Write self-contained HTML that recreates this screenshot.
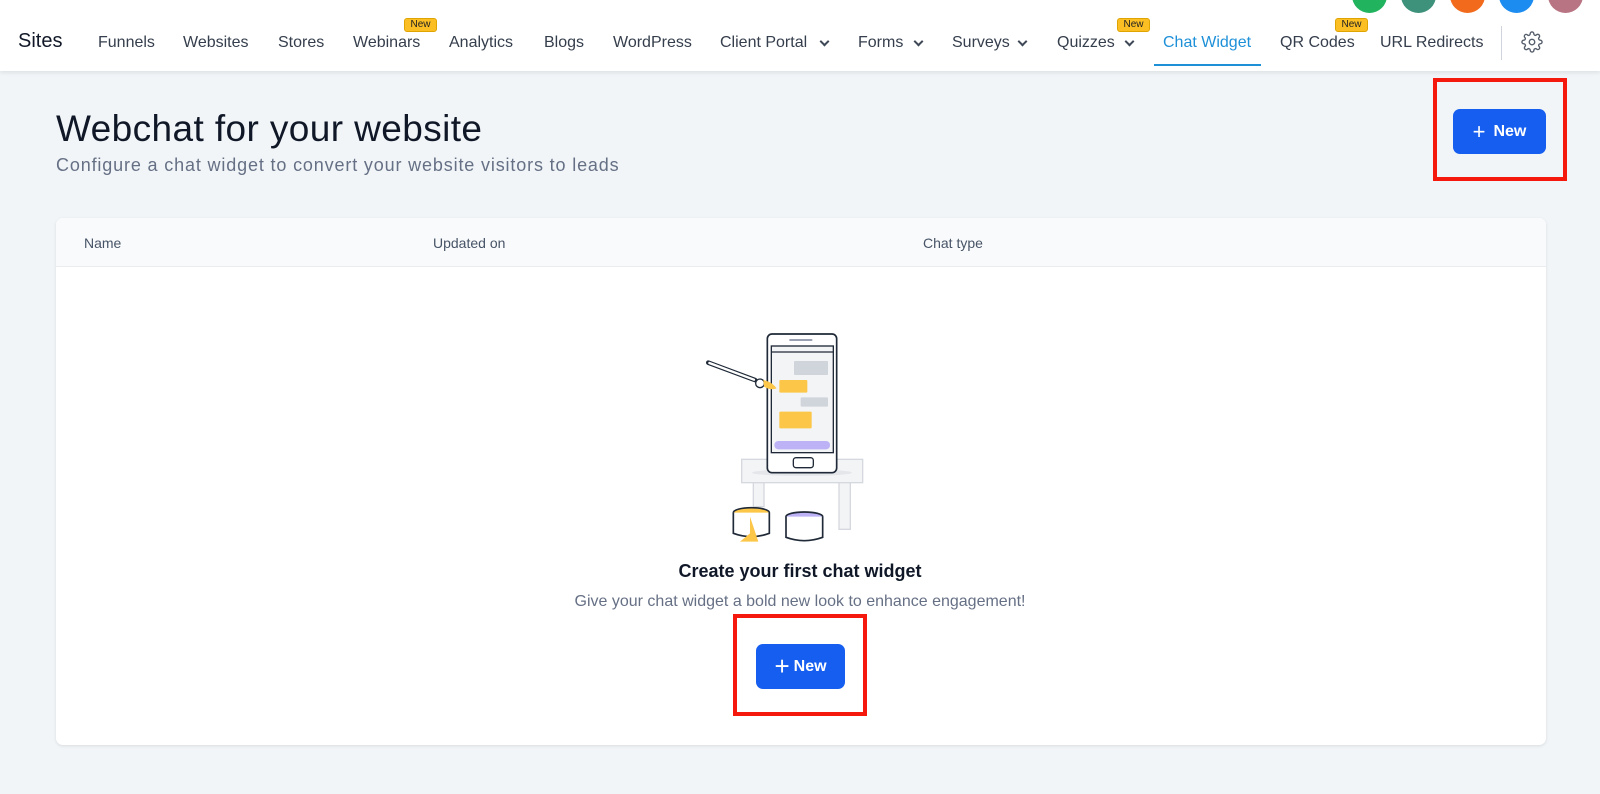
<!DOCTYPE html>
<html><head><meta charset="utf-8"><style>
*{box-sizing:border-box;margin:0;padding:0}
body{width:1600px;height:794px;overflow:hidden;background:#f1f5f8;font-family:"Liberation Sans",Arial,sans-serif;position:relative}
.nav{position:absolute;left:0;top:0;width:1600px;height:71px;background:#fff;box-shadow:0 2px 4px rgba(0,0,0,.08)}
.nav span{position:absolute;top:33px;font-size:16px;color:#353e4c;white-space:nowrap;line-height:20px}
.chev{position:absolute;top:38px;width:7px;height:7px;border-right:2px solid #3f4856;border-bottom:2px solid #3f4856;transform:rotate(45deg)}
.badge{position:absolute;top:18px;height:14px;background:#fbbf24;border:1px solid #e0a400;border-radius:3px;font-size:10px;line-height:12px;color:#222;text-align:center;width:33px}
.av{position:absolute;top:-22px;width:35px;height:35px;border-radius:50%}
.btn{position:absolute;background:#155eef;color:#fff;border-radius:7px;font-size:16px;font-weight:bold;display:flex;align-items:center;justify-content:center;gap:8px}
.red{position:absolute;border:4px solid #f5180d}
</style></head><body>
<div class="nav">
<span style="left:18px;top:31px;font-size:20px;color:#111827">Sites</span>
<span style="left:98px">Funnels</span>
<span style="left:183px">Websites</span>
<span style="left:278px">Stores</span>
<span style="left:353px">Webinars</span>
<div class="badge" style="left:404px">New</div>
<span style="left:449px">Analytics</span>
<span style="left:544px">Blogs</span>
<span style="left:613px">WordPress</span>
<span style="left:720px">Client Portal</span><div class="chev" style="left:821px"></div>
<span style="left:858px">Forms</span><div class="chev" style="left:915px"></div>
<span style="left:952px">Surveys</span><div class="chev" style="left:1019px"></div>
<span style="left:1057px">Quizzes</span><div class="chev" style="left:1126px"></div>
<div class="badge" style="left:1117px">New</div>
<span style="left:1163px;color:#1e90d8">Chat Widget</span>
<div style="position:absolute;left:1154px;top:64px;width:107px;height:2px;background:#1e90d8"></div>
<span style="left:1280px">QR Codes</span>
<div class="badge" style="left:1335px">New</div>
<span style="left:1380px">URL Redirects</span>
<div style="position:absolute;left:1501px;top:26px;width:1px;height:34px;background:#d0d5dd"></div>
<svg style="position:absolute;left:1521px;top:31px" width="22" height="22" viewBox="0 0 24 24" fill="none" stroke="#555e6b" stroke-width="1.5"><circle cx="12" cy="12" r="3"/><path d="M19.4 15a1.65 1.65 0 0 0 .33 1.820l.06.06a2 2 0 1 1-2.830 2.830l-.06-.06a1.650 1.650 0 0 0-1.820-.33 1.650 1.650 0 0 0-1 1.510V21a2 2 0 0 1-4 0v-.09A1.650 1.650 0 0 0 9 19.4a1.650 1.650 0 0 0-1.820.33l-.06.06a2 2 0 1 1-2.830-2.830l.06-.06A1.650 1.650 0 0 0 4.680 15a1.650 1.650 0 0 0-1.510-1H3a2 2 0 0 1 0-4h.09A1.650 1.650 0 0 0 4.6 9a1.650 1.650 0 0 0-.33-1.820l-.06-.06a2 2 0 1 1 2.830-2.830l.06.06A1.650 1.650 0 0 0 9 4.680 1.650 1.650 0 0 0 10 3.170V3a2 2 0 0 1 4 0v.09a1.650 1.650 0 0 0 1 1.510 1.650 1.650 0 0 0 1.820-.33l.06-.06a2 2 0 1 1 2.830 2.830l-.06.06A1.650 1.650 0 0 0 19.4 9a1.650 1.650 0 0 0 1.510 1H21a2 2 0 0 1 0 4h-.09a1.650 1.650 0 0 0-1.510 1z"/></svg>
<div class="av" style="left:1352px;background:#22b35e"></div>
<div class="av" style="left:1401px;background:#3e917a"></div>
<div class="av" style="left:1450px;background:#f26b1d"></div>
<div class="av" style="left:1499px;background:#1d8cf0"></div>
<div class="av" style="left:1548px;background:#b87482"></div>
</div>

<div style="position:absolute;left:56px;top:108px;font-size:37px;letter-spacing:0.4px;color:#101828">Webchat for your website</div>
<div style="position:absolute;left:56px;top:155px;font-size:18px;letter-spacing:0.85px;color:#667085">Configure a chat widget to convert your website visitors to leads</div>
<div class="btn" style="left:1453px;top:109px;width:93px;height:45px"><span style="font-weight:normal;font-size:22px">+</span>New</div>
<div class="red" style="left:1433px;top:78px;width:134px;height:103px"></div>

<div style="position:absolute;left:56px;top:218px;width:1490px;height:527px;background:#fff;border-radius:7px;box-shadow:0 1px 3px rgba(0,0,0,.1);overflow:hidden">
<div style="height:49px;background:#f9fafb;border-bottom:1px solid #eaecf0;position:relative;font-size:14px;color:#475467">
<span style="position:absolute;left:28px;top:17px">Name</span>
<span style="position:absolute;left:377px;top:17px">Updated on</span>
<span style="position:absolute;left:867px;top:17px">Chat type</span>
</div>
</div>

<svg style="position:absolute;left:690px;top:320px" width="200" height="230" viewBox="0 0 600 690">
<rect x="155" y="418" width="363" height="70" fill="#f3f4f6" stroke="#d5d8de" stroke-width="4"/>
<rect x="190" y="488" width="32" height="72" fill="#f3f4f6" stroke="#d5d8de" stroke-width="4"/>
<rect x="447" y="488" width="34" height="140" fill="#f3f4f6" stroke="#d5d8de" stroke-width="4"/>
<ellipse cx="336" cy="458" rx="150" ry="10" fill="#e4e6ea"/>
<rect x="232" y="42" width="208" height="416" rx="14" fill="#fff" stroke="#1f2937" stroke-width="5"/>
<rect x="244" y="78" width="186" height="320" fill="#f3f4f6" stroke="#1f2937" stroke-width="4"/>
<line x1="244" y1="96" x2="430" y2="96" stroke="#1f2937" stroke-width="4"/>
<line x1="300" y1="60" x2="365" y2="60" stroke="#8a93a6" stroke-width="5" stroke-linecap="round"/>
<rect x="310" y="413" width="60" height="30" rx="8" fill="#fff" stroke="#1f2937" stroke-width="4"/>
<rect x="312" y="123" width="102" height="42" rx="3" fill="#d0d4db"/>
<rect x="268" y="180" width="84" height="38" rx="3" fill="#fcc648"/>
<rect x="332" y="232" width="82" height="28" rx="3" fill="#d0d4db"/>
<rect x="268" y="275" width="97" height="50" rx="3" fill="#fcc648"/>
<rect x="253" y="363" width="167" height="25" rx="12" fill="#bcb2f5"/>
<path d="M55 128 L195 180" stroke="#1f2937" stroke-width="14" stroke-linecap="round"/>
<path d="M58 129 L192 179" stroke="#fff" stroke-width="7" stroke-linecap="round"/>
<circle cx="210" cy="190" r="13" fill="#fff" stroke="#1f2937" stroke-width="4"/>
<path d="M220 180 Q245 185 260 205 Q240 212 222 200Z" fill="#fcc648"/>
<ellipse cx="184" cy="578" rx="54" ry="15" fill="#fcc648" stroke="#1f2937" stroke-width="5"/>
<path d="M130 578 V640 Q184 660 238 640 V578" fill="#fff" stroke="#1f2937" stroke-width="5"/>
<path d="M180 590 V640 L150 665 L205 665 Z" fill="#fcc648"/>
<ellipse cx="343" cy="590" rx="55" ry="14" fill="#bcb2f5" stroke="#1f2937" stroke-width="5"/>
<path d="M288 590 V652 Q343 672 398 652 V590" fill="#fff" stroke="#1f2937" stroke-width="5"/>
</svg>

<div style="position:absolute;left:0;width:1600px;top:561px;text-align:center;font-size:18px;font-weight:bold;color:#101828">Create your first chat widget</div>
<div style="position:absolute;left:0;width:1600px;top:593px;text-align:center;font-size:16px;color:#667085">Give your chat widget a bold new look to enhance engagement!</div>
<div class="btn" style="left:756px;top:644px;width:89px;height:45px;gap:4px"><span style="font-weight:normal;font-size:26px">+</span>New</div>
<div class="red" style="left:733px;top:614px;width:134px;height:102px"></div>
</body></html>
